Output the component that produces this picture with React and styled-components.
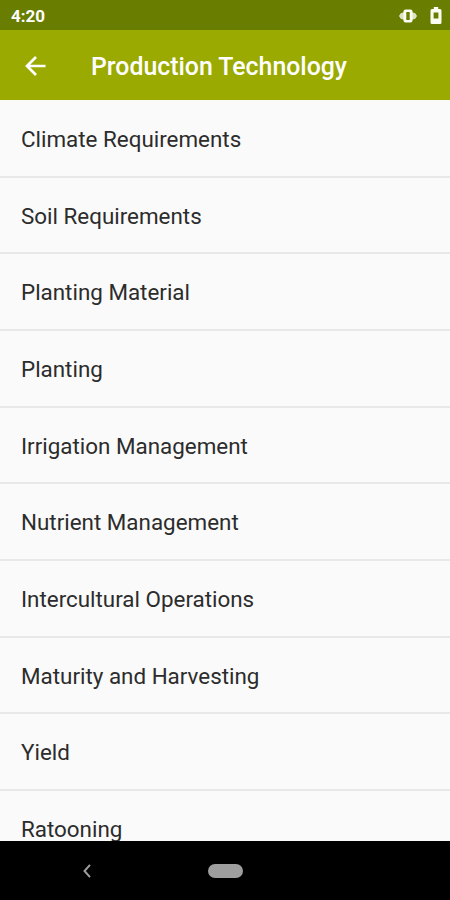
import styled, { createGlobalStyle } from 'styled-components'

const COLORS = {
    STATUS_BAR: '#697d00',
    APP_BAR: '#9aaa00',
    BACKGROUND: '#fafafa',
    DIVIDER: '#e8e8e8',
    TEXT: '#2c2c2c',
    NAV_ICON: '#9e9e9e',
}

const GlobalStyle = createGlobalStyle`
    body {
        margin: 0;
        font-family: Roboto, sans-serif;
    }
`

const Screen = styled.div`
    width: 450px;
    height: 900px;
    display: flex;
    flex-direction: column;
    overflow: hidden;
    background: ${COLORS.BACKGROUND};
`

const StatusBar = styled.div`
    box-sizing: border-box;
    flex: none;
    height: 30px;
    padding: 1px 8px 0 11px;
    display: flex;
    align-items: center;
    justify-content: space-between;
    background: ${COLORS.STATUS_BAR};
`

const Clock = styled.span`
    color: #fff;
    font-size: 17px;
    font-weight: 700;
    line-height: 20px;
`

const StatusIcons = styled.div`
    display: flex;
    align-items: center;
    gap: 13px;
    color: #fbfcf2;
`

const AppBar = styled.header`
    box-sizing: border-box;
    flex: none;
    height: 70px;
    padding: 2px 25px 0;
    display: flex;
    align-items: center;
    gap: 45px;
    background: ${COLORS.APP_BAR};
`

const BackButton = styled.button`
    display: flex;
    padding: 0;
    border: none;
    background: none;
    color: #fff;
    cursor: pointer;
`

const Title = styled.h1`
    margin: 0;
    padding-top: 2px;
    color: #fff;
    font-size: 24.85px;
    font-weight: 500;
    line-height: 30px;
    white-space: nowrap;
`

const TopicList = styled.ul`
    flex: 1;
    min-height: 0;
    margin: 0;
    padding: 1px 0 0;
    list-style: none;
    overflow: hidden;
`

const Topic = styled.li`
    box-sizing: border-box;
    height: 76.67px;
    padding: 1.6px 21px 0;
    display: flex;
    align-items: center;
    border-bottom: 2px solid ${COLORS.DIVIDER};
    color: ${COLORS.TEXT};
    font-size: 22.4px;
    line-height: 28px;
    white-space: nowrap;
`

const NavBar = styled.nav`
    flex: none;
    height: 59px;
    display: grid;
    grid-template-columns: 174px 103px 173px;
    align-items: center;
    justify-items: center;
    background: #000;
    color: ${COLORS.NAV_ICON};
`

const HomePill = styled.div`
    width: 35px;
    height: 14px;
    border-radius: 7px;
    background: currentColor;
`

const topics = [
    'Climate Requirements',
    'Soil Requirements',
    'Planting Material',
    'Planting',
    'Irrigation Management',
    'Nutrient Management',
    'Intercultural Operations',
    'Maturity and Harvesting',
    'Yield',
    'Ratooning',
]

const VibrateIcon = () => (
    <svg width="18" height="14" viewBox="0 0 18 14" fill="currentColor">
        <path d="M0 7 1.500 4.500 5 3v8L1.500 9.500zM18 7l-1.500-2.500L13 3v8l3.500-1.500z" opacity=".8" />
        <path fillRule="evenodd" d="M6.500.5h5a2 2 0 0 1 2 2v9a2 2 0 0 1-2 2h-5a2 2 0 0 1-2-2v-9a2 2 0 0 1 2-2zM7.300 3v8h3.400V3z" />
    </svg>
)

const BatteryIcon = () => (
    <svg width="12" height="17" viewBox="0 0 12 17" fill="currentColor">
        <path fillRule="evenodd" d="M3.800 0h4.400v2H10a1.500 1.500 0 0 1 1.500 1.500v12A1.500 1.500 0 0 1 10 17H2A1.500 1.500 0 0 1 .5 15.500v-12A1.500 1.500 0 0 1 2 2h1.800zM3.600 5.500v6h4.800v-6z" />
    </svg>
)

const BackArrow = () => (
    <svg width="21" height="20" viewBox="0 0 21 20" fill="none" stroke="currentColor" strokeWidth="2.700">
        <path d="M20.500 10H2.500M11 1 2 10l9 9" />
    </svg>
)

const NavBack = () => (
    <svg width="8" height="14" viewBox="0 0 8 14" fill="none" stroke="currentColor" strokeWidth="2">
        <path d="M7 .8 1.500 7 7 13.200" />
    </svg>
)

export default function App() {
    return (
        <>
            <GlobalStyle />
            <Screen>
                <StatusBar>
                    <Clock>4:20</Clock>
                    <StatusIcons>
                        <VibrateIcon />
                        <BatteryIcon />
                    </StatusIcons>
                </StatusBar>
                <AppBar>
                    <BackButton aria-label="Back"><BackArrow /></BackButton>
                    <Title>Production Technology</Title>
                </AppBar>
                <TopicList>
                    {topics.map(topic => <Topic key={topic}>{topic}</Topic>)}
                </TopicList>
                <NavBar>
                    <NavBack />
                    <HomePill />
                </NavBar>
            </Screen>
        </>
    )
}
